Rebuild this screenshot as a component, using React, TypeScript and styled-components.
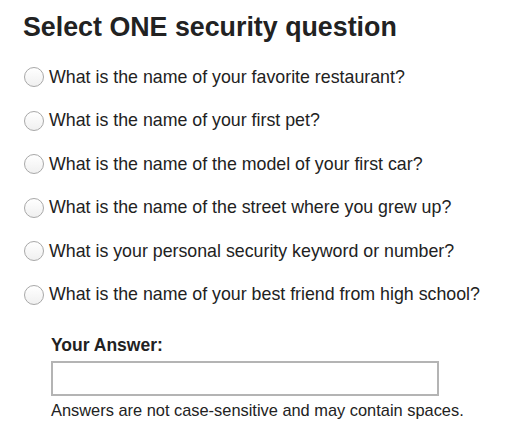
import React from "react";
import styled, { createGlobalStyle } from "styled-components";

const Global = createGlobalStyle`
  html, body { margin: 0; padding: 0; background: #fff; }
  body { font-family: "Liberation Sans", Arial, sans-serif; color: #222; }
`;

const Page = styled.div`
  padding: 11px 0 0 23px;
  width: 489px;
`;

const Title = styled.h1`
  margin: 0;
  font-size: 26.8px;
  font-weight: bold;
  line-height: 32px;
  color: #222;
`;

const List = styled.div`
  display: flex;
  flex-direction: column;
  gap: 19.6px;
  margin-top: 22px;
`;

const Row = styled.label`
  display: flex;
  align-items: center;
  gap: 5px;
  height: 24px;
  font-size: 17.8px;
  color: #222;
`;

const Radio = styled.span`
  width: 20px;
  height: 20px;
  margin-left: 1px;
  border-radius: 50%;
  border: 1px solid #a8a8a8;
  background: linear-gradient(#ffffff, #f0f0f0);
  box-sizing: border-box;
  flex: none;
`;

const AnswerBlock = styled.div`
  margin-left: 28px;
  margin-top: 28px;
  display: flex;
  flex-direction: column;
`;

const AnswerLabel = styled.div`
  font-size: 17.5px;
  font-weight: bold;
  line-height: 20px;
`;

const Input = styled.div`
  margin-top: 6px;
  width: 388px;
  height: 35px;
  box-sizing: border-box;
  border: 2px solid #b4b4b4;
  background: #fff;
`;

const Note = styled.div`
  margin-top: 5px;
  font-size: 16.4px;
  line-height: 18px;
`;

const questions = [
  "What is the name of your favorite restaurant?",
  "What is the name of your first pet?",
  "What is the name of the model of your first car?",
  "What is the name of the street where you grew up?",
  "What is your personal security keyword or number?",
  "What is the name of your best friend from high school?",
];

export default function App() {
  return (
    <Page>
      <Global />
      <Title>Select ONE security question</Title>
      <List>
        {questions.map((q) => (
          <Row key={q}>
            <Radio />
            {q}
          </Row>
        ))}
      </List>
      <AnswerBlock>
        <AnswerLabel>Your Answer:</AnswerLabel>
        <Input />
        <Note>Answers are not case-sensitive and may contain spaces.</Note>
      </AnswerBlock>
    </Page>
  );
}
